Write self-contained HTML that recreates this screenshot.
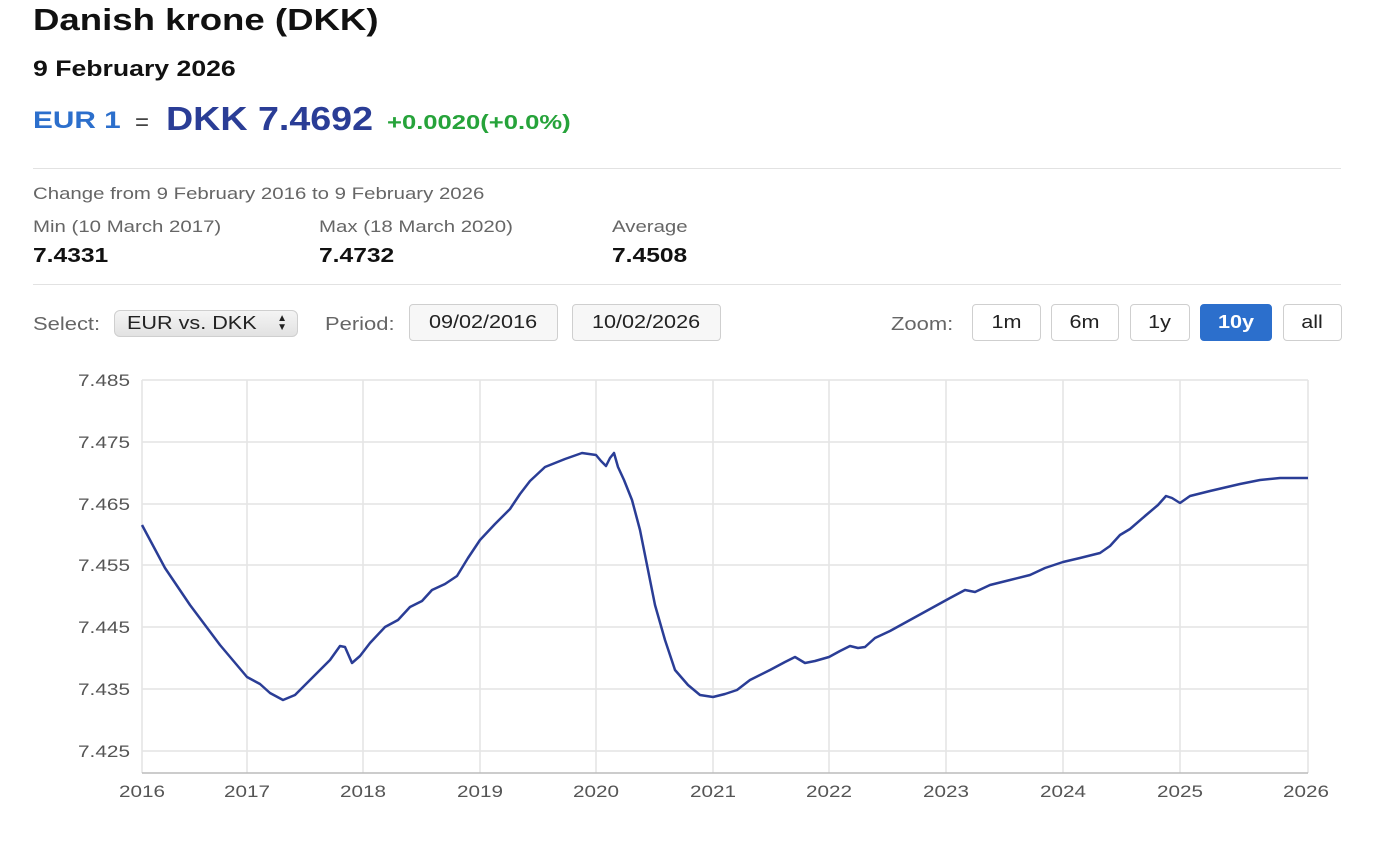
<!DOCTYPE html>
<html><head><meta charset="utf-8"><style>
body{margin:0;width:1379px;height:845px;background:#fff;font-family:"Liberation Sans",Arial,sans-serif;position:relative;overflow:hidden}
.a{position:absolute;white-space:nowrap;transform-origin:0 0}
.s{transform:scaleX(1.2)}
.hr{position:absolute;left:33px;width:1308px;height:1px;background:#e2e2e2}
.btn{position:absolute;top:304px;height:37px;border:1px solid #cfcfcf;border-radius:4px;background:#fff;font-size:18px;color:#222;display:flex;align-items:center;justify-content:center;box-sizing:border-box}
.btn span.t{display:inline-block;transform:scaleX(1.2)}
.g{color:#666;font-size:17px}
</style></head><body>
<div class="a" style="left:33px;top:2px;font-size:31px;font-weight:bold;color:#111;transform:scaleX(1.18)">Danish krone (DKK)</div>
<div class="a" style="left:33px;top:56px;font-size:22px;font-weight:bold;color:#111;transform:scaleX(1.21)">9 February 2026</div>
<div class="a" style="left:33px;top:107px;font-size:24px;font-weight:bold;color:#2c6fcc;transform:scaleX(1.24)">EUR 1</div>
<div class="a" style="left:135px;top:109px;font-size:24px;color:#444">=</div>
<div class="a" style="left:166px;top:100px;font-size:33px;font-weight:bold;color:#2a3d96;transform:scaleX(1.14)">DKK 7.4692</div>
<div class="a" style="left:387px;top:112px;font-size:20px;font-weight:bold;color:#26a33a;transform:scaleX(1.28)">+0.0020(+0.0%)</div>
<div class="hr" style="top:168px"></div>
<div class="a g s" style="left:33px;top:184px">Change from 9 February 2016 to 9 February 2026</div>
<div class="a g s" style="left:33px;top:217px">Min (10 March 2017)</div>
<div class="a g s" style="left:319px;top:217px">Max (18 March 2020)</div>
<div class="a g s" style="left:612px;top:217px">Average</div>
<div class="a" style="left:33px;top:245px;font-size:20px;font-weight:bold;color:#111;transform:scaleX(1.23)">7.4331</div>
<div class="a" style="left:319px;top:245px;font-size:20px;font-weight:bold;color:#111;transform:scaleX(1.23)">7.4732</div>
<div class="a" style="left:612px;top:245px;font-size:20px;font-weight:bold;color:#111;transform:scaleX(1.23)">7.4508</div>
<div class="hr" style="top:284px"></div>
<div class="a g" style="left:33px;top:314px;font-size:18px;transform:scaleX(1.22)">Select:</div>
<div class="btn" style="left:114px;top:310px;width:184px;height:27px;background:linear-gradient(#f4f4f4,#e2e2e2);justify-content:flex-start;padding-left:12px;border-radius:6px"><span class="t" style="transform-origin:0 0">EUR vs. DKK</span><span style="position:absolute;right:10px;top:3px;font-size:10px;line-height:9px">▲<br>▼</span></div>
<div class="a g" style="left:325px;top:314px;font-size:18px;transform:scaleX(1.22)">Period:</div>
<div class="btn" style="left:409px;width:149px;background:#f7f7f7"><span class="t">09/02/2016</span></div>
<div class="btn" style="left:572px;width:149px;background:#f7f7f7"><span class="t">10/02/2026</span></div>
<div class="a g" style="left:891px;top:314px;font-size:18px;transform:scaleX(1.22)">Zoom:</div>
<div class="btn" style="left:972px;width:69px"><span class="t">1m</span></div>
<div class="btn" style="left:1051px;width:68px"><span class="t">6m</span></div>
<div class="btn" style="left:1130px;width:60px"><span class="t">1y</span></div>
<div class="btn" style="left:1200px;width:72px;background:#2c6fcc;border-color:#2c6fcc;color:#fff;font-weight:bold"><span class="t">10y</span></div>
<div class="btn" style="left:1283px;width:59px"><span class="t">all</span></div>
<svg class="a" style="left:0;top:0" width="1379" height="845">
<g stroke="#e4e4e4" stroke-width="1.5">
<line x1="142" y1="380" x2="1308" y2="380"/><line x1="142" y1="442" x2="1308" y2="442"/><line x1="142" y1="504" x2="1308" y2="504"/><line x1="142" y1="565" x2="1308" y2="565"/><line x1="142" y1="627" x2="1308" y2="627"/><line x1="142" y1="689" x2="1308" y2="689"/><line x1="142" y1="751" x2="1308" y2="751"/>
<line x1="247" y1="380" x2="247" y2="773"/><line x1="363" y1="380" x2="363" y2="773"/><line x1="480" y1="380" x2="480" y2="773"/><line x1="596" y1="380" x2="596" y2="773"/><line x1="713" y1="380" x2="713" y2="773"/><line x1="829" y1="380" x2="829" y2="773"/><line x1="946" y1="380" x2="946" y2="773"/><line x1="1063" y1="380" x2="1063" y2="773"/><line x1="1180" y1="380" x2="1180" y2="773"/><line x1="1308" y1="380" x2="1308" y2="773"/><line x1="142" y1="380" x2="142" y2="773"/>
</g>
<line x1="142" y1="773" x2="1308" y2="773" stroke="#bbb" stroke-width="1.5"/>
<g font-size="17" fill="#555" font-family="Liberation Sans,sans-serif" lengthAdjust="spacingAndGlyphs">
<text x="78" y="386" textLength="52" lengthAdjust="spacingAndGlyphs">7.485</text><text x="78" y="448" textLength="52" lengthAdjust="spacingAndGlyphs">7.475</text><text x="78" y="510" textLength="52" lengthAdjust="spacingAndGlyphs">7.465</text><text x="78" y="571" textLength="52" lengthAdjust="spacingAndGlyphs">7.455</text><text x="78" y="633" textLength="52" lengthAdjust="spacingAndGlyphs">7.445</text><text x="78" y="695" textLength="52" lengthAdjust="spacingAndGlyphs">7.435</text><text x="78" y="757" textLength="52" lengthAdjust="spacingAndGlyphs">7.425</text></g>
<g font-size="17" fill="#555" font-family="Liberation Sans,sans-serif">
<text x="119" y="797" textLength="46" lengthAdjust="spacingAndGlyphs">2016</text><text x="224" y="797" textLength="46" lengthAdjust="spacingAndGlyphs">2017</text><text x="340" y="797" textLength="46" lengthAdjust="spacingAndGlyphs">2018</text><text x="457" y="797" textLength="46" lengthAdjust="spacingAndGlyphs">2019</text><text x="573" y="797" textLength="46" lengthAdjust="spacingAndGlyphs">2020</text><text x="690" y="797" textLength="46" lengthAdjust="spacingAndGlyphs">2021</text><text x="806" y="797" textLength="46" lengthAdjust="spacingAndGlyphs">2022</text><text x="923" y="797" textLength="46" lengthAdjust="spacingAndGlyphs">2023</text><text x="1040" y="797" textLength="46" lengthAdjust="spacingAndGlyphs">2024</text><text x="1157" y="797" textLength="46" lengthAdjust="spacingAndGlyphs">2025</text><text x="1283" y="797" textLength="46" lengthAdjust="spacingAndGlyphs">2026</text></g>
<polyline fill="none" stroke="#2a3d96" stroke-width="2.5" stroke-linejoin="round" points="142,525 165,568 190,605 220,645 247,677 260,684 270,693 283,700 295,695 310,680 330,660 340,646 345,647 352,663 360,656 370,643 385,627 398,620 410,607 422,601 432,590 445,584 457,576 468,558 480,540 495,524 510,509 520,494 530,481 545,467 565,459 582,453 596,455 601,461 606,466 610,458 614,453 618,467 624,480 632,500 640,530 648,570 655,605 665,640 675,670 688,685 700,695 713,697 725,694 737,690 750,680 770,670 785,662 795,657 805,663 815,661 829,657 840,651 850,646 858,648 865,647 875,638 890,631 910,620 930,609 950,598 965,590 975,592 990,585 1010,580 1030,575 1045,568 1063,562 1080,558 1100,553 1110,546 1120,535 1130,529 1145,516 1158,505 1166,496 1172,498 1180,503 1190,496 1210,491 1240,484 1260,480 1280,478 1308,478"/>
</svg>
</body></html>
